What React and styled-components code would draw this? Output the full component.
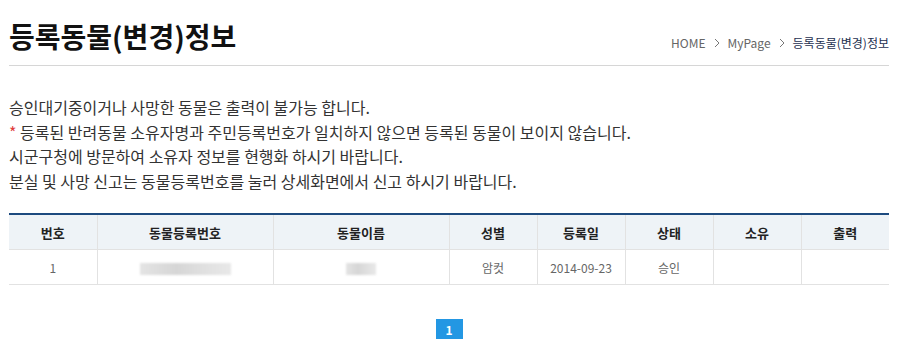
import React from "react";
import styled, { createGlobalStyle } from "styled-components";

const GlobalStyle = createGlobalStyle`
  body {
    margin: 0;
    background: #fff;
    font-family: "Noto Sans CJK KR", "Noto Sans", sans-serif;
    color: #333;
  }
`;

const columns = [
  { label: "번호", width: "10%" },
  { label: "동물등록번호", width: "20%" },
  { label: "동물이름", width: "20%" },
  { label: "성별", width: "10%" },
  { label: "등록일", width: "10%" },
  { label: "상태", width: "10%" },
  { label: "소유", width: "10%" },
  { label: "출력", width: "10%" },
];

const Chevron = () => (
  <ChevronIcon viewBox="0 0 8 10" width="8" height="10">
    <path d="M2 1 L6 5 L2 9" fill="none" stroke="#777" strokeWidth="1" />
  </ChevronIcon>
);

const App = () => (
  <Page>
    <GlobalStyle />
    <Header>
      <Title>등록동물(변경)정보</Title>
      <Breadcrumb>
        <Crumb>HOME</Crumb>
        <Chevron />
        <Crumb>MyPage</Crumb>
        <Chevron />
        <Crumb current>등록동물(변경)정보</Crumb>
      </Breadcrumb>
    </Header>

    <Notice>
      <p>승인대기중이거나 사망한 동물은 출력이 불가능 합니다.</p>
      <p>
        <Star>*</Star> 등록된 반려동물 소유자명과 주민등록번호가 일치하지 않으면 등록된 동물이 보이지 않습니다.
      </p>
      <p>시군구청에 방문하여 소유자 정보를 현행화 하시기 바랍니다.</p>
      <p>분실 및 사망 신고는 동물등록번호를 눌러 상세화면에서 신고 하시기 바랍니다.</p>
    </Notice>

    <Table>
      <colgroup>
        {columns.map(c => (
          <col key={c.label} style={{ width: c.width }} />
        ))}
      </colgroup>
      <thead>
        <tr>
          {columns.map(c => (
            <Th key={c.label}>{c.label}</Th>
          ))}
        </tr>
      </thead>
      <tbody>
        <tr>
          <Td>1</Td>
          <Td>
            <Blur w={91} />
          </Td>
          <Td>
            <Blur w={30} />
          </Td>
          <Td>암컷</Td>
          <Td>2014-09-23</Td>
          <Td>승인</Td>
          <Td></Td>
          <Td></Td>
        </tr>
      </tbody>
    </Table>

    <Pager>
      <PageButton active>1</PageButton>
    </Pager>
  </Page>
);

const Page = styled.div`
  width: 880px;
  padding: 0 0 0 9px;
`;

const Header = styled.div`
  display: flex;
  justify-content: space-between;
  align-items: flex-end;
  height: 66px;
  border-bottom: 1px solid #d6d6d6;
  box-sizing: border-box;
`;

const Title = styled.h1`
  margin: 0 0 10px;
  font-size: 28px;
  line-height: 38px;
  font-weight: 700;
  color: #111;
`;

const Breadcrumb = styled.div`
  display: flex;
  align-items: center;
  gap: 5px;
  margin-bottom: 14px;
  font-size: 12px;
  line-height: 16px;
`;

const Crumb = styled.span`
  color: ${p => (p.current ? "#1d2f4f" : "#666")};
`;

const ChevronIcon = styled.svg`
  display: block;
  margin: 0 2px;
`;

const Notice = styled.div`
  padding-top: 29px;
  font-size: 16px;
  line-height: 24.5px;
  color: #333;

  p {
    margin: 0;
  }
`;

const Star = styled.span`
  color: #e03c3c;
`;

const Table = styled.table`
  width: 880px;
  margin-top: 20px;
  border-collapse: collapse;
  table-layout: fixed;
  border-top: 2px solid #1d4a7f;
`;

const Th = styled.th`
  height: 34px;
  padding: 0;
  background: #eef3f7;
  border-left: 1px solid #e2e2e2;
  border-bottom: 1px solid #e2e2e2;
  font-size: 13px;
  font-weight: 700;
  color: #222;
  text-align: center;

  &:first-child {
    border-left: none;
  }
`;

const Td = styled.td`
  height: 34px;
  padding: 0;
  border-left: 1px solid #e2e2e2;
  border-bottom: 1px solid #e2e2e2;
  font-size: 12px;
  color: #666;
  text-align: center;

  &:first-child {
    border-left: none;
  }
`;

const Blur = styled.span`
  display: inline-block;
  vertical-align: middle;
  width: ${p => p.w}px;
  height: 12px;
  background: linear-gradient(90deg, #e4e4e4, #d6d6d6 40%, #e0e0e0 70%, #e8e8e8);
  filter: blur(1px);
`;

const Pager = styled.div`
  display: flex;
  justify-content: center;
  padding-top: 34px;
`;

const PageButton = styled.span`
  display: flex;
  align-items: center;
  justify-content: center;
  width: 27px;
  height: 20px;
  background: ${p => (p.active ? "#2397e3" : "#fff")};
  color: ${p => (p.active ? "#fff" : "#333")};
  font-size: 12px;
  font-weight: 700;
`;

export default App;
